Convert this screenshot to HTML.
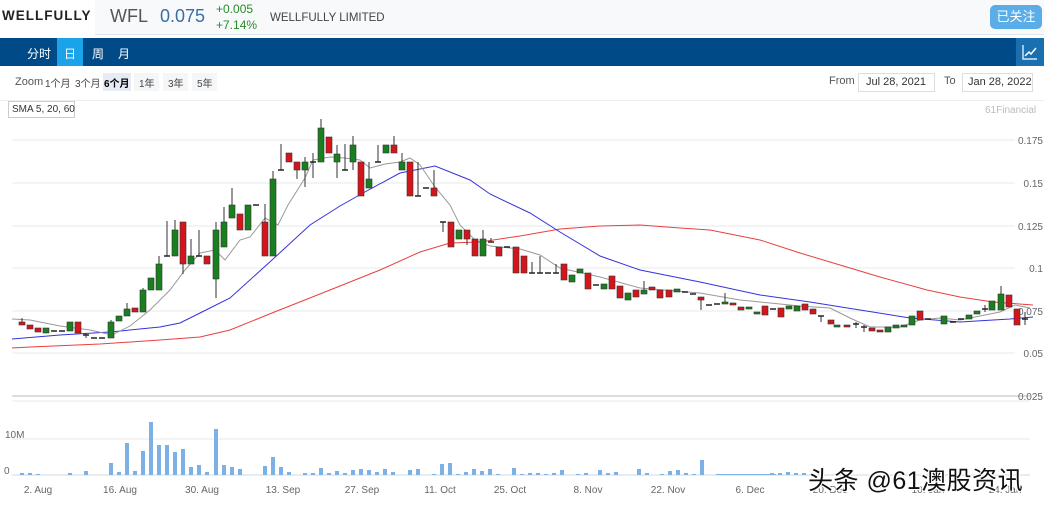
<!DOCTYPE html>
<html><head><meta charset="utf-8">
<style>
*{margin:0;padding:0;box-sizing:border-box}
body{width:1044px;height:506px;overflow:hidden;background:#fff;font-family:"Liberation Sans","Noto Sans CJK SC",sans-serif;position:relative}
.a{position:absolute;white-space:nowrap}
</style></head><body>
<div class="a" style="left:0;top:0;width:1044px;height:35px;background:#f8f9fb;border-bottom:1px solid #e3e5e8"></div>
<div class="a" style="left:0;top:0;width:95px;height:35px;background:#fff"></div>
<div class="a" style="left:2px;top:8px;font-size:13.5px;font-weight:bold;letter-spacing:1px;color:#222">WELLFULLY</div>
<div class="a" style="left:110px;top:6px;font-size:18px;color:#555">WFL</div>
<div class="a" style="left:160px;top:6px;font-size:18px;color:#3a6ea5">0.075</div>
<div class="a" style="left:216px;top:2px;font-size:12px;color:#2a8a2a">+0.005</div>
<div class="a" style="left:216px;top:18px;font-size:12px;color:#2a8a2a">+7.14%</div>
<div class="a" style="left:270px;top:12px;font-size:11.5px;color:#444">WELLFULLY LIMITED</div>
<div class="a" style="left:990px;top:5px;width:52px;height:24px;background:#5aade6;border-radius:5px;color:#fff;font-size:13px;text-align:center;line-height:24px">已关注</div>

<div class="a" style="left:0;top:38px;width:1044px;height:28px;background:#004a87"></div>
<div class="a" style="left:57px;top:38px;width:26px;height:28px;background:#1aa3e8"></div>
<div class="a" style="left:27px;top:45px;font-size:12px;color:#fff">分时</div>
<div class="a" style="left:64px;top:45px;font-size:12px;color:#fff">日</div>
<div class="a" style="left:92px;top:45px;font-size:12px;color:#fff">周</div>
<div class="a" style="left:118px;top:45px;font-size:12px;color:#fff">月</div>
<div class="a" style="left:1016px;top:38px;width:28px;height:28px;background:#1a6fb0"></div>
<svg class="a" style="left:1022px;top:44px" width="16" height="16"><path d="M1 1V15H15" stroke="#fff" fill="none" stroke-width="1.2"/><path d="M3 12L7 8L9 10L14 4" stroke="#fff" fill="none" stroke-width="1.5"/></svg>

<div class="a" style="left:15px;top:76px;font-size:11px;color:#555">Zoom</div>
<div class="a" style="left:45px;top:75px;font-size:10px;color:#444">1个月</div>
<div class="a" style="left:75px;top:75px;font-size:10px;color:#444">3个月</div>
<div class="a" style="left:103px;top:73px;width:28px;height:18px;background:#e6ebf5"></div>
<div class="a" style="left:104px;top:75px;font-size:10px;color:#000;font-weight:bold">6个月</div>
<div class="a" style="left:134px;top:73px;width:25px;height:18px;background:#f5f6f8"></div>
<div class="a" style="left:139px;top:75px;font-size:10px;color:#444">1年</div>
<div class="a" style="left:163px;top:73px;width:25px;height:18px;background:#f5f6f8"></div>
<div class="a" style="left:168px;top:75px;font-size:10px;color:#444">3年</div>
<div class="a" style="left:192px;top:73px;width:25px;height:18px;background:#f5f6f8"></div>
<div class="a" style="left:197px;top:75px;font-size:10px;color:#444">5年</div>
<div class="a" style="left:829px;top:75px;font-size:11px;color:#555">From</div>
<div class="a" style="left:858px;top:73px;width:77px;height:19px;border:1px solid #ddd;font-size:11px;color:#333;padding:2px 0 0 7px">Jul 28, 2021</div>
<div class="a" style="left:944px;top:75px;font-size:11px;color:#555">To</div>
<div class="a" style="left:962px;top:73px;width:71px;height:19px;border:1px solid #ddd;font-size:11px;color:#333;padding:2px 0 0 5px">Jan 28, 2022</div>
<div class="a" style="left:0;top:100px;width:1044px;height:1px;background:#eee"></div>
<div class="a" style="left:8px;top:101px;width:67px;height:17px;border:1px solid #ccc;font-size:10px;color:#333;padding:2px 0 0 3px">SMA 5, 20, 60</div>
<div class="a" style="left:985px;top:105px;font-size:10px;color:#bbb">61Financial</div>

<svg class="a" style="left:0;top:0" width="1044" height="506">
<g stroke="#e8e8e8" stroke-width="1">
<line x1="12" y1="140" x2="1015" y2="140"/><line x1="12" y1="183" x2="1015" y2="183"/><line x1="12" y1="226" x2="1015" y2="226"/><line x1="12" y1="268" x2="1015" y2="268"/><line x1="12" y1="311" x2="1015" y2="311"/><line x1="12" y1="353" x2="1015" y2="353"/>
<line x1="12" y1="396" x2="1030" y2="396" stroke="#ddd" stroke-width="2"/><line x1="12" y1="401" x2="1030" y2="401"/><line x1="12" y1="439" x2="1030" y2="439"/>
</g>
<line x1="12" y1="475" x2="1030" y2="475" stroke="#cdd8e6"/>
<g font-size="10" fill="#666" text-anchor="end" font-family="Liberation Sans,sans-serif">
<text x="1043" y="144">0.175</text><text x="1043" y="187">0.15</text><text x="1043" y="230">0.125</text><text x="1043" y="272">0.1</text><text x="1043" y="315">0.075</text><text x="1043" y="357">0.05</text><text x="1043" y="400">0.025</text>
</g>
<g font-size="10" fill="#666" font-family="Liberation Sans,sans-serif">
<text x="5" y="438">10M</text><text x="4" y="474">0</text>
</g>
<g font-size="10" fill="#666" text-anchor="middle" font-family="Liberation Sans,sans-serif">
<text x="38" y="493">2. Aug</text><text x="120" y="493">16. Aug</text><text x="202" y="493">30. Aug</text><text x="283" y="493">13. Sep</text><text x="362" y="493">27. Sep</text><text x="440" y="493">11. Oct</text><text x="510" y="493">25. Oct</text><text x="588" y="493">8. Nov</text><text x="668" y="493">22. Nov</text><text x="750" y="493">6. Dec</text><text x="830" y="493">20. Dec</text><text x="928" y="493">10. Jan</text><text x="1005" y="493">24. Jan</text>
</g>
<g fill="#7cb1e6">
<rect x="20" y="473" width="4" height="2"/><rect x="28" y="473" width="4" height="2"/><rect x="36" y="474" width="4" height="1"/><rect x="68" y="473" width="4" height="2"/><rect x="84" y="471" width="4" height="4"/><rect x="109" y="463" width="4" height="12"/><rect x="117" y="472" width="4" height="3"/><rect x="125" y="443" width="4" height="32"/><rect x="133" y="471" width="4" height="4"/><rect x="141" y="451" width="4" height="24"/><rect x="149" y="422" width="4" height="53"/><rect x="157" y="445" width="4" height="30"/><rect x="165" y="445" width="4" height="30"/><rect x="173" y="452" width="4" height="23"/><rect x="181" y="449" width="4" height="26"/><rect x="189" y="467" width="4" height="8"/><rect x="197" y="465" width="4" height="10"/><rect x="205" y="472" width="4" height="3"/><rect x="214" y="429" width="4" height="46"/><rect x="222" y="465" width="4" height="10"/><rect x="230" y="467" width="4" height="8"/><rect x="238" y="469" width="4" height="6"/><rect x="263" y="466" width="4" height="9"/><rect x="271" y="457" width="4" height="18"/><rect x="279" y="467" width="4" height="8"/><rect x="287" y="472" width="4" height="3"/><rect x="303" y="473" width="4" height="2"/><rect x="311" y="473" width="4" height="2"/><rect x="319" y="468" width="4" height="7"/><rect x="327" y="473" width="4" height="2"/><rect x="335" y="471" width="4" height="4"/><rect x="343" y="473" width="4" height="2"/><rect x="351" y="470" width="4" height="5"/><rect x="359" y="469" width="4" height="6"/><rect x="367" y="470" width="4" height="5"/><rect x="375" y="472" width="4" height="3"/><rect x="383" y="469" width="4" height="6"/><rect x="391" y="472" width="4" height="3"/><rect x="408" y="470" width="4" height="5"/><rect x="416" y="469" width="4" height="6"/><rect x="432" y="474" width="4" height="1"/><rect x="440" y="464" width="4" height="11"/><rect x="448" y="463" width="4" height="12"/><rect x="456" y="474" width="4" height="1"/><rect x="464" y="472" width="4" height="3"/><rect x="472" y="469" width="4" height="6"/><rect x="480" y="471" width="4" height="4"/><rect x="488" y="469" width="4" height="6"/><rect x="496" y="474" width="4" height="1"/><rect x="512" y="468" width="4" height="7"/><rect x="520" y="474" width="4" height="1"/><rect x="528" y="473" width="4" height="2"/><rect x="536" y="473" width="4" height="2"/><rect x="544" y="474" width="4" height="1"/><rect x="552" y="473" width="4" height="2"/><rect x="560" y="470" width="4" height="5"/><rect x="576" y="474" width="4" height="1"/><rect x="584" y="473" width="4" height="2"/><rect x="598" y="470" width="4" height="5"/><rect x="606" y="473" width="4" height="2"/><rect x="614" y="472" width="4" height="3"/><rect x="637" y="469" width="4" height="6"/><rect x="645" y="473" width="4" height="2"/><rect x="660" y="474" width="4" height="1"/><rect x="668" y="471" width="4" height="4"/><rect x="676" y="470" width="4" height="5"/><rect x="684" y="473" width="4" height="2"/><rect x="692" y="474" width="4" height="1"/><rect x="700" y="460" width="4" height="15"/>
<rect x="716" y="474" width="60" height="1"/><rect x="770" y="473" width="4" height="2"/><rect x="778" y="473" width="4" height="2"/><rect x="786" y="472" width="4" height="3"/><rect x="794" y="473" width="4" height="2"/><rect x="802" y="473" width="4" height="2"/>
</g>
<polyline fill="none" stroke="#e84040" stroke-width="1" points="12,348 30,347 100,344 160,340 200,337 230,330 272,313 330,290 380,270 420,252 450,243 480,242 520,236 560,229 600,226 640,225 680,228 710,230 760,240 800,253 850,268 880,277 927,290 960,297 993,302 1033,305"/>
<polyline fill="none" stroke="#3333dd" stroke-width="1" points="12,339 60,335 110,332 160,327 180,323 200,313 230,298 272,260 310,225 340,206 363,193 400,173 435,166 470,180 490,194 530,213 560,232 600,256 640,270 700,282 760,295 810,302 860,310 910,318 960,322 1010,319 1033,317"/>
<polyline fill="none" stroke="#999" stroke-width="1" points="12,319 30,320 60,326 90,330 112,335 130,326 150,310 170,290 185,270 200,253 215,250 225,260 240,240 250,237 265,218 278,225 288,205 305,178 313,160 330,157 345,158 360,160 370,168 385,164 400,162 410,158 420,165 435,187 450,205 460,225 475,240 490,246 520,249 540,255 560,268 600,277 640,288 700,293 740,300 770,303 800,306 830,308 850,318 870,327 900,327 920,320 940,318 960,320 980,316 1000,312 1015,305 1030,308"/>
<g stroke="#333" stroke-width="1">
<line x1="22" y1="318" x2="22" y2="324"/><line x1="86" y1="333" x2="86" y2="338"/><line x1="111" y1="320" x2="111" y2="338"/><line x1="127" y1="303" x2="127" y2="316"/><line x1="143" y1="288" x2="143" y2="312"/><line x1="159" y1="256" x2="159" y2="290"/><line x1="167" y1="221" x2="167" y2="256"/><line x1="175" y1="220" x2="175" y2="256"/><line x1="183" y1="222" x2="183" y2="274"/><line x1="191" y1="239" x2="191" y2="264"/><line x1="199" y1="230" x2="199" y2="256"/><line x1="216" y1="222" x2="216" y2="298"/><line x1="224" y1="207" x2="224" y2="247"/><line x1="232" y1="188" x2="232" y2="218"/><line x1="265" y1="204" x2="265" y2="256"/><line x1="273" y1="171" x2="273" y2="256"/><line x1="281" y1="144" x2="281" y2="170"/><line x1="297" y1="162" x2="297" y2="179"/><line x1="305" y1="157" x2="305" y2="187"/><line x1="313" y1="153" x2="313" y2="178"/><line x1="321" y1="119" x2="321" y2="162"/><line x1="337" y1="145" x2="337" y2="178"/><line x1="345" y1="144" x2="345" y2="170"/><line x1="353" y1="136" x2="353" y2="170"/><line x1="369" y1="162" x2="369" y2="188"/><line x1="378" y1="145" x2="378" y2="162"/><line x1="394" y1="136" x2="394" y2="153"/><line x1="402" y1="153" x2="402" y2="170"/><line x1="418" y1="162" x2="418" y2="196"/><line x1="434" y1="170" x2="434" y2="196"/><line x1="443" y1="222" x2="443" y2="232"/><line x1="467" y1="230" x2="467" y2="245"/><line x1="483" y1="230" x2="483" y2="256"/><line x1="491" y1="238" x2="491" y2="242"/><line x1="516" y1="247" x2="516" y2="273"/><line x1="532" y1="262" x2="532" y2="273"/><line x1="540" y1="256" x2="540" y2="273"/><line x1="556" y1="264" x2="556" y2="273"/><line x1="644" y1="281" x2="644" y2="294"/><line x1="701" y1="297" x2="701" y2="310"/><line x1="725" y1="293" x2="725" y2="304"/><line x1="821" y1="316" x2="821" y2="322"/><line x1="1001" y1="286" x2="1001" y2="310"/><line x1="1025" y1="312" x2="1025" y2="325"/><line x1="985" y1="305" x2="985" y2="312"/><line x1="856" y1="322" x2="856" y2="328"/><line x1="864" y1="325" x2="864" y2="332"/>
</g>
<g stroke="#222" stroke-width="1.5">
<line x1="51" y1="331" x2="57" y2="331"/><line x1="59" y1="331" x2="65" y2="331"/><line x1="83" y1="335" x2="89" y2="335"/><line x1="91" y1="338" x2="97" y2="338"/><line x1="99" y1="338" x2="105" y2="338"/><line x1="164" y1="256" x2="170" y2="256"/><line x1="196" y1="256" x2="202" y2="256"/><line x1="253" y1="205" x2="259" y2="205"/><line x1="278" y1="170" x2="284" y2="170"/><line x1="310" y1="162" x2="316" y2="162"/><line x1="342" y1="170" x2="348" y2="170"/><line x1="375" y1="162" x2="381" y2="162"/><line x1="415" y1="196" x2="421" y2="196"/><line x1="423" y1="188" x2="429" y2="188"/><line x1="440" y1="222" x2="446" y2="222"/><line x1="488" y1="242" x2="494" y2="242"/><line x1="504" y1="247" x2="510" y2="247"/><line x1="529" y1="273" x2="535" y2="273"/><line x1="537" y1="273" x2="543" y2="273"/><line x1="545" y1="273" x2="551" y2="273"/><line x1="553" y1="273" x2="559" y2="273"/><line x1="593" y1="285" x2="599" y2="285"/><line x1="682" y1="292" x2="688" y2="292"/><line x1="690" y1="294" x2="696" y2="294"/><line x1="706" y1="305" x2="712" y2="305"/><line x1="714" y1="304" x2="720" y2="304"/><line x1="770" y1="309" x2="776" y2="309"/><line x1="818" y1="316" x2="824" y2="316"/><line x1="853" y1="324" x2="859" y2="324"/><line x1="861" y1="327" x2="867" y2="327"/><line x1="925" y1="319" x2="931" y2="319"/><line x1="950" y1="322" x2="956" y2="322"/><line x1="958" y1="319" x2="964" y2="319"/><line x1="982" y1="309" x2="988" y2="309"/><line x1="1022" y1="319" x2="1028" y2="319"/>
</g>
<g fill="#d4161c" stroke="#333" stroke-width="0.6">
<rect x="19" y="322" width="6" height="3"/><rect x="27" y="325" width="6" height="4"/><rect x="35" y="328" width="6" height="4"/><rect x="75" y="322" width="6" height="11"/><rect x="132" y="308" width="6" height="4"/><rect x="180" y="222" width="6" height="42"/><rect x="204" y="256" width="6" height="8"/><rect x="237" y="214" width="6" height="16"/><rect x="262" y="222" width="6" height="34"/><rect x="286" y="153" width="6" height="9"/><rect x="294" y="162" width="6" height="8"/><rect x="326" y="137" width="6" height="16"/><rect x="358" y="162" width="6" height="34"/><rect x="391" y="145" width="6" height="8"/><rect x="407" y="162" width="6" height="34"/><rect x="431" y="188" width="6" height="8"/><rect x="448" y="222" width="6" height="25"/><rect x="464" y="230" width="6" height="9"/><rect x="472" y="239" width="6" height="17"/><rect x="496" y="247" width="6" height="9"/><rect x="513" y="247" width="6" height="26"/><rect x="521" y="256" width="6" height="17"/><rect x="561" y="264" width="6" height="16"/><rect x="585" y="273" width="6" height="16"/><rect x="609" y="276" width="6" height="13"/><rect x="617" y="286" width="6" height="12"/><rect x="633" y="290" width="6" height="7"/><rect x="649" y="287" width="6" height="3"/><rect x="657" y="290" width="6" height="8"/><rect x="666" y="290" width="6" height="7"/><rect x="698" y="297" width="6" height="3"/><rect x="730" y="303" width="6" height="2"/><rect x="738" y="307" width="6" height="3"/><rect x="762" y="306" width="6" height="9"/><rect x="778" y="308" width="6" height="9"/><rect x="802" y="304" width="6" height="6"/><rect x="810" y="309" width="6" height="5"/><rect x="828" y="320" width="6" height="4"/><rect x="844" y="325" width="6" height="2"/><rect x="869" y="328" width="6" height="3"/><rect x="877" y="330" width="6" height="2"/><rect x="917" y="311" width="6" height="9"/><rect x="1006" y="295" width="6" height="12"/><rect x="1014" y="309" width="6" height="16"/>
</g>
<g fill="#1a7f1e" stroke="#333" stroke-width="0.6">
<rect x="43" y="328" width="6" height="5"/><rect x="67" y="322" width="6" height="9"/><rect x="108" y="322" width="6" height="16"/><rect x="116" y="316" width="6" height="5"/><rect x="124" y="309" width="6" height="7"/><rect x="140" y="290" width="6" height="22"/><rect x="148" y="278" width="6" height="12"/><rect x="156" y="264" width="6" height="26"/><rect x="172" y="230" width="6" height="26"/><rect x="188" y="256" width="6" height="8"/><rect x="213" y="230" width="6" height="49"/><rect x="221" y="222" width="6" height="25"/><rect x="229" y="205" width="6" height="13"/><rect x="245" y="205" width="6" height="25"/><rect x="270" y="179" width="6" height="77"/><rect x="302" y="162" width="6" height="8"/><rect x="318" y="128" width="6" height="34"/><rect x="334" y="154" width="6" height="8"/><rect x="350" y="145" width="6" height="17"/><rect x="366" y="179" width="6" height="9"/><rect x="383" y="145" width="6" height="8"/><rect x="399" y="162" width="6" height="8"/><rect x="456" y="230" width="6" height="9"/><rect x="480" y="239" width="6" height="17"/><rect x="569" y="275" width="6" height="7"/><rect x="577" y="269" width="6" height="4"/><rect x="601" y="284" width="6" height="5"/><rect x="625" y="293" width="6" height="7"/><rect x="641" y="290" width="6" height="4"/><rect x="674" y="289" width="6" height="3"/><rect x="722" y="302" width="6" height="2"/><rect x="746" y="307" width="6" height="2"/><rect x="754" y="312" width="6" height="2"/><rect x="786" y="306" width="6" height="3"/><rect x="794" y="306" width="6" height="5"/><rect x="834" y="325" width="6" height="2"/><rect x="885" y="327" width="6" height="5"/><rect x="893" y="325" width="6" height="3"/><rect x="901" y="325" width="6" height="2"/><rect x="909" y="316" width="6" height="9"/><rect x="941" y="316" width="6" height="8"/><rect x="966" y="315" width="6" height="4"/><rect x="974" y="311" width="6" height="3"/><rect x="989" y="301" width="6" height="9"/><rect x="998" y="294" width="6" height="16"/>
</g>
</svg>
<div class="a" style="left:808px;top:461px;font-size:25px;letter-spacing:0.5px;color:#111;text-shadow:1px 1px 0 #fff,-1px -1px 0 #fff,1px -1px 0 #fff,-1px 1px 0 #fff">头条 @61澳股资讯</div>
</body></html>
